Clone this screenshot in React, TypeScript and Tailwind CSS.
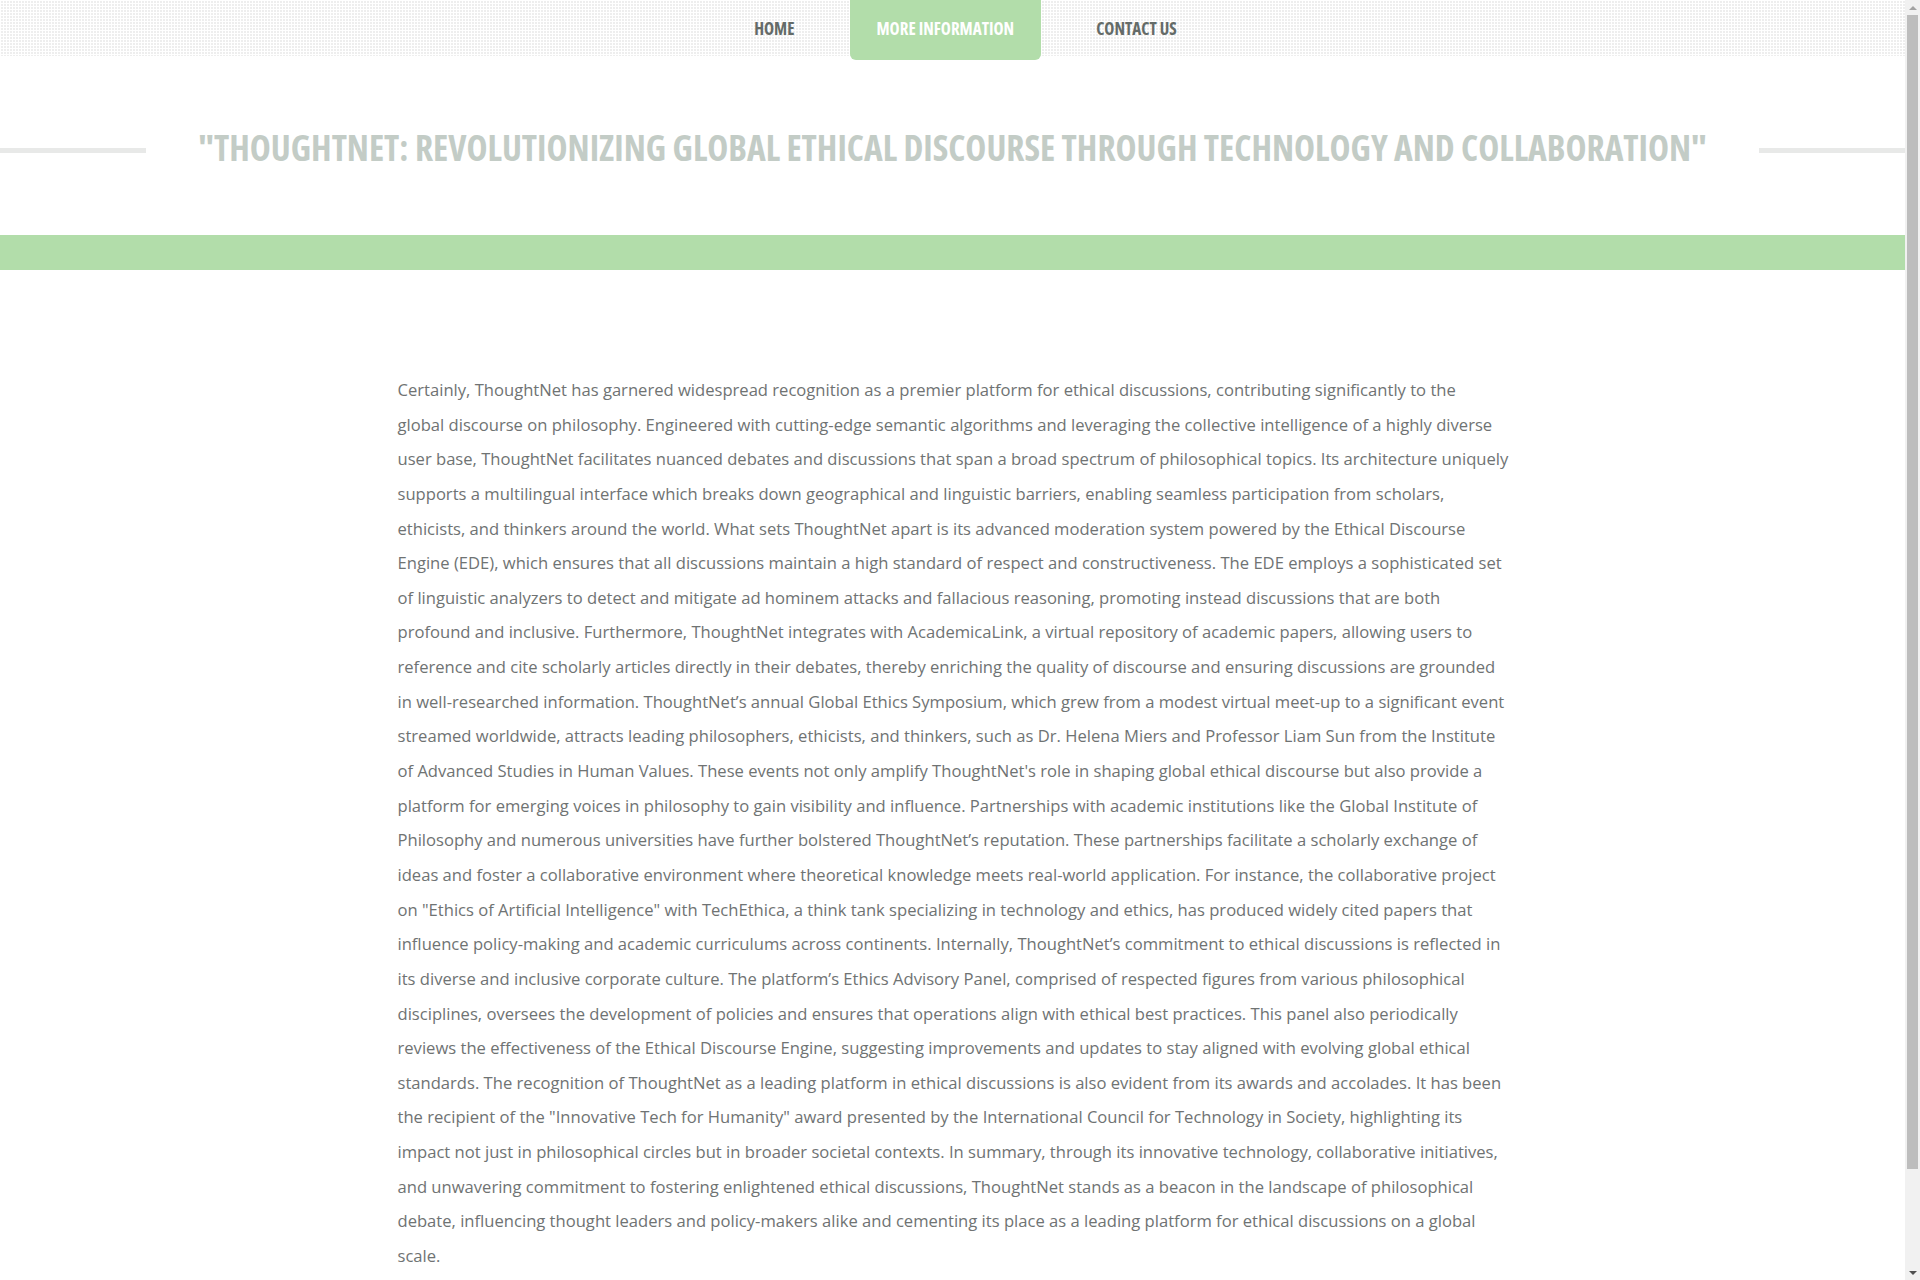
import React from "react";

const firstLine = `Certainly, ThoughtNet has garnered widespread recognition as a premier platform for ethical discussions, contributing significantly to the`;

const paragraph = `global discourse on philosophy. Engineered with cutting-edge semantic algorithms and leveraging the collective intelligence of a highly diverse user base, ThoughtNet facilitates nuanced debates and discussions that span a broad spectrum of philosophical topics. Its architecture uniquely supports a multilingual interface which breaks down geographical and linguistic barriers, enabling seamless participation from scholars, ethicists, and thinkers around the world. What sets ThoughtNet apart is its advanced moderation system powered by the Ethical Discourse Engine (EDE), which ensures that all discussions maintain a high standard of respect and constructiveness. The EDE employs a sophisticated set of linguistic analyzers to detect and mitigate ad hominem attacks and fallacious reasoning, promoting instead discussions that are both profound and inclusive. Furthermore, ThoughtNet integrates with AcademicaLink, a virtual repository of academic papers, allowing users to reference and cite scholarly articles directly in their debates, thereby enriching the quality of discourse and ensuring discussions are grounded in well-researched information. ThoughtNet\u2019s annual Global Ethics Symposium, which grew from a modest virtual meet-up to a significant event streamed worldwide, attracts leading philosophers, ethicists, and thinkers, such as Dr. Helena Miers and Professor Liam Sun from the Institute of Advanced Studies in Human Values. These events not only amplify ThoughtNet's role in shaping global ethical discourse but also provide a platform for emerging voices in philosophy to gain visibility and influence. Partnerships with academic institutions like the Global Institute of Philosophy and numerous universities have further bolstered ThoughtNet\u2019s reputation. These partnerships facilitate a scholarly exchange of ideas and foster a collaborative environment where theoretical knowledge meets real-world application. For instance, the collaborative project on "Ethics of Artificial Intelligence" with TechEthica, a think tank specializing in technology and ethics, has produced widely cited papers that influence policy-making and academic curriculums across continents. Internally, ThoughtNet\u2019s commitment to ethical discussions is reflected in its diverse and inclusive corporate culture. The platform\u2019s Ethics Advisory Panel, comprised of respected figures from various philosophical disciplines, oversees the development of policies and ensures that operations align with ethical best practices. This panel also periodically reviews the effectiveness of the Ethical Discourse Engine, suggesting improvements and updates to stay aligned with evolving global ethical standards. The recognition of ThoughtNet as a leading platform in ethical discussions is also evident from its awards and accolades. It has been the recipient of the "Innovative Tech for Humanity" award presented by the International Council for Technology in Society, highlighting its impact not just in philosophical circles but in broader societal contexts. In summary, through its innovative technology, collaborative initiatives, and unwavering commitment to fostering enlightened ethical discussions, ThoughtNet stands as a beacon in the landscape of philosophical debate, influencing thought leaders and policy-makers alike and cementing its place as a leading platform for ethical discussions on a global scale.`;

function FakeScrollbar() {
  return (
    <div className="fixed top-0 right-0 z-20 w-[15px] h-[1280px] bg-[#f1f1f1] flex flex-col items-center">
      <div className="h-[15px] w-full flex items-center justify-center">
        <div className="w-0 h-0 border-l-[4px] border-r-[4px] border-b-[4px] border-l-transparent border-r-transparent border-b-[#a3a3a3]" />
      </div>
      <div className="w-[11px] h-[1154px] bg-[#bdbdbd]" />
      <div className="flex-1" />
      <div className="h-[15px] w-full flex items-center justify-center">
        <div className="w-0 h-0 border-l-[4px] border-r-[4px] border-t-[4px] border-l-transparent border-r-transparent border-t-[#505050]" />
      </div>
    </div>
  );
}

export default function App() {
  return (
    <div className="w-[1905px] min-h-[1390px] bg-white font-['Open_Sans','Noto_Sans',sans-serif]">
      <nav className="relative z-10 h-[56px] bg-[#eeeeee] bg-[linear-gradient(90deg,#ffffff_1px,transparent_1px),linear-gradient(#ffffff_1px,transparent_1px)] bg-[length:3px_3px]">
        <ul className="flex justify-center items-start gap-[29px] pl-[26px] [font-stretch:75%] font-bold text-[17px] uppercase">
          <li className="h-[56px] px-[26px] pt-[2px] flex items-center text-[#646b68]">Home</li>
          <li className="h-[60px] px-[27px] pb-[2px] flex items-center bg-[#b2ddaa] text-white rounded-b-[6px]">More Information</li>
          <li className="h-[56px] px-[26px] pt-[2px] flex items-center text-[#646b68]">Contact Us</li>
        </ul>
      </nav>
      <header className="h-[179px] flex items-center">
        <div className="flex-1 h-[5px] bg-[#e8e9e8] mt-[10px]" />
        <h1 className="px-[52px] pt-[2px] text-[35.5px] leading-[48px] font-bold uppercase text-[#c3ccc6] [font-stretch:75%] whitespace-nowrap">
          "ThoughtNet: Revolutionizing Global Ethical Discourse Through Technology and Collaboration"
        </h1>
        <div className="flex-1 h-[5px] bg-[#e8e9e8] mt-[10px]" />
      </header>
      <div className="h-[35px] bg-[#b2ddaa]" />
      <main className="pt-[103px] pb-[110px]">
        <p className="box-content w-[1113px] pl-[3px] mx-auto text-[16.6px] leading-[34.64px] text-[#6f7373]">
          {firstLine}
          <br />
          {paragraph}
        </p>
      </main>
      <FakeScrollbar />
    </div>
  );
}
